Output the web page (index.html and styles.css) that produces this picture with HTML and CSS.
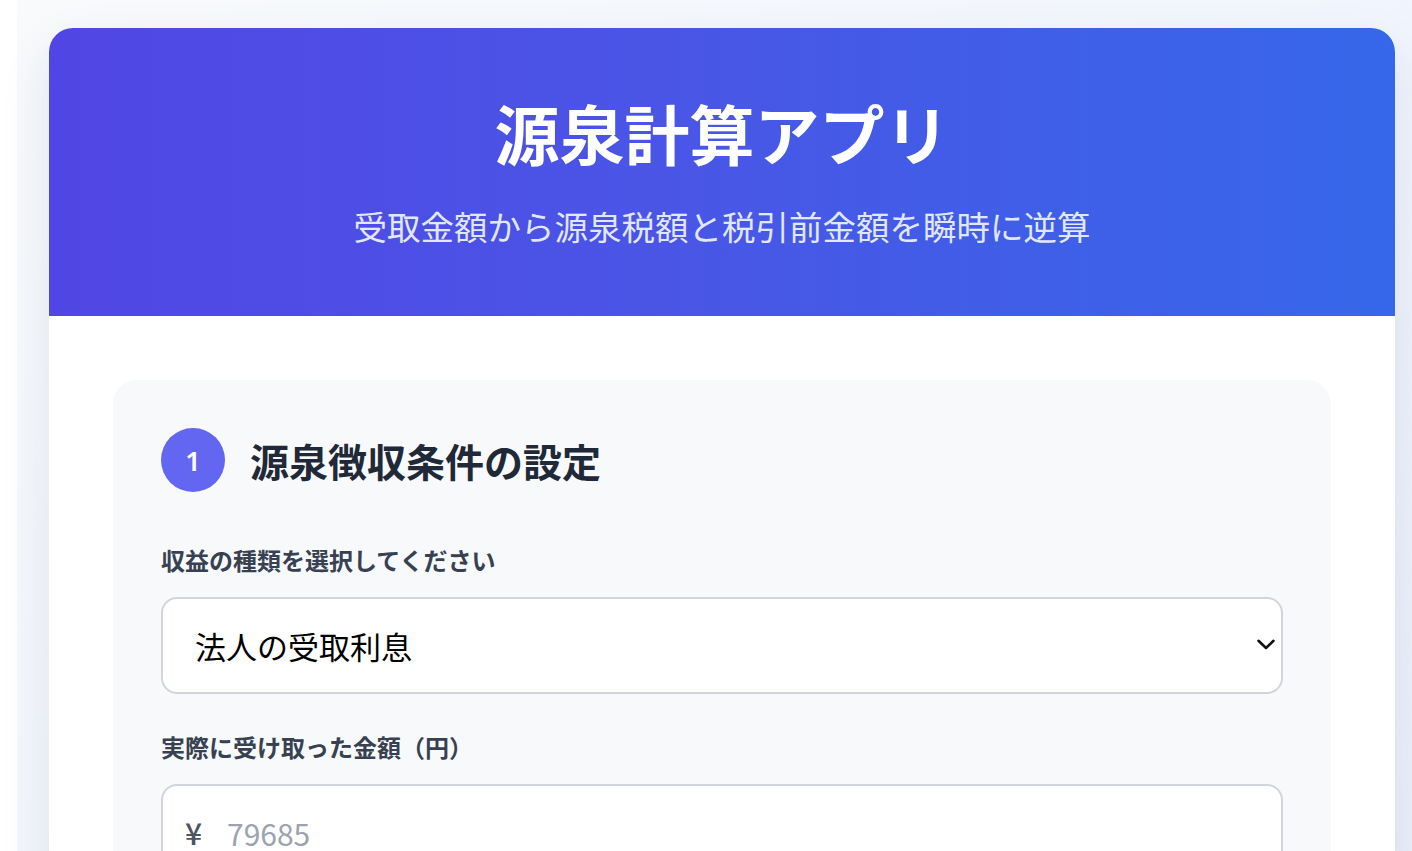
FILE: index.html
```html
<!DOCTYPE html>
<html lang="ja">
<head>
    <meta charset="UTF-8">
    <title>源泉計算アプリ</title>
    <link rel="stylesheet" href="styles.css">
</head>
<body>
    <div class="page">
        <div class="app-card">
            <header class="app-header">
                <h1>源泉計算アプリ</h1>
                <p>受取金額から源泉税額と税引前金額を瞬時に逆算</p>
            </header>

            <main class="app-body">
                <section class="step-panel">
                    <div class="step-title">
                        <span class="step-num">1</span>
                        <h2>源泉徴収条件の設定</h2>
                    </div>

                    <div class="field">
                        <label for="income-type">収益の種類を選択してください</label>
                        <div class="select-wrap">
                            <select id="income-type">
                                <option>法人の受取利息</option>
                                <option>法人の受取配当</option>
                                <option>個人の報酬・料金</option>
                            </select>
                            <svg class="chevron" width="18" height="11" viewBox="0 0 18 11">
                                <path d="M1.5 1.8 L9 9 L16.5 1.8" fill="none" stroke="#111" stroke-width="2.6" stroke-linecap="round" stroke-linejoin="round"/>
                            </svg>
                        </div>
                    </div>

                    <div class="field">
                        <label for="amount">実際に受け取った金額（円）</label>
                        <div class="input-wrap">
                            <span class="yen">¥</span>
                            <input type="number" id="amount" placeholder="79685">
                        </div>
                    </div>
                </section>
            </main>
        </div>
    </div>
</body>
</html>
```

FILE: styles.css
```css
html, body {
    margin: 0;
    overflow-x: hidden;
}
body {
    background: #fff;
    font-family: "Noto Sans CJK JP", "Noto Sans", sans-serif;
}
.page {
    margin-left: 17px;
    min-height: 851px;
    padding: 28px 17px 0 32px;
    background: linear-gradient(135deg, #f8fafc 0%, #f1f5fd 55%, #eaeffa 100%);
}
.app-card {
    background: #fff;
    border-radius: 24px 24px 0 0;
    box-shadow: 0 20px 50px rgba(30, 41, 80, 0.10);
    overflow: hidden;
}
.app-header {
    background: linear-gradient(90deg, #5146e5 0%, #4a55e6 45%, #3667e9 100%);
    color: #fff;
    text-align: center;
    padding: 65px 32px 65px;
}
.app-header h1 {
    margin: 0;
    font-size: 65px;
    line-height: 78px;
    font-weight: 700;
}
.app-header p {
    margin: 29px 0 0;
    font-size: 33.5px;
    line-height: 51px;
    font-weight: 400;
    color: #e0e7ff;
}
.app-body {
    padding: 64px 64px 0;
}
.step-panel {
    background: #f8f9fb;
    border-radius: 24px;
    padding: 48px 48px 48px;
    min-height: 600px;
}
.step-title {
    display: flex;
    align-items: center;
    gap: 25px;
    margin-bottom: 50px;
}
.step-num {
    width: 64px;
    height: 64px;
    border-radius: 50%;
    background: #6366f1;
    color: #fff;
    display: flex;
    align-items: center;
    justify-content: center;
    font-family: "Noto Sans", sans-serif;
    font-size: 27px;
    font-weight: 600;
}
.step-title h2 {
    margin: 0;
    font-size: 39px;
    line-height: 1.3;
    font-weight: 700;
    color: #1f2937;
}
.field {
    margin-bottom: 35px;
}
.field label {
    display: block;
    font-size: 24px;
    line-height: 36px;
    font-weight: 700;
    color: #374151;
    margin-bottom: 19px;
}
.select-wrap, .input-wrap {
    position: relative;
}
select, input {
    box-sizing: border-box;
    width: 100%;
    height: 97px;
    border: 2px solid #d1d5db;
    border-radius: 16px;
    background: #fff;
    font-family: "Noto Sans CJK JP", "Noto Sans", sans-serif;
    font-size: 30px;
    color: #000;
    outline: none;
}
select {
    appearance: none;
    -webkit-appearance: none;
    padding: 0 60px 0 32px;
    font-size: 31px;
}
.chevron {
    position: absolute;
    right: 8px;
    top: 42px;
    pointer-events: none;
}
input {
    padding: 0 24px 0 64px;
}
input::placeholder {
    color: #9ca3af;
}
.yen {
    position: absolute;
    left: 24px;
    top: 0;
    line-height: 97px;
    font-size: 30px;
    font-weight: 500;
    color: #4b5563;
}
```
